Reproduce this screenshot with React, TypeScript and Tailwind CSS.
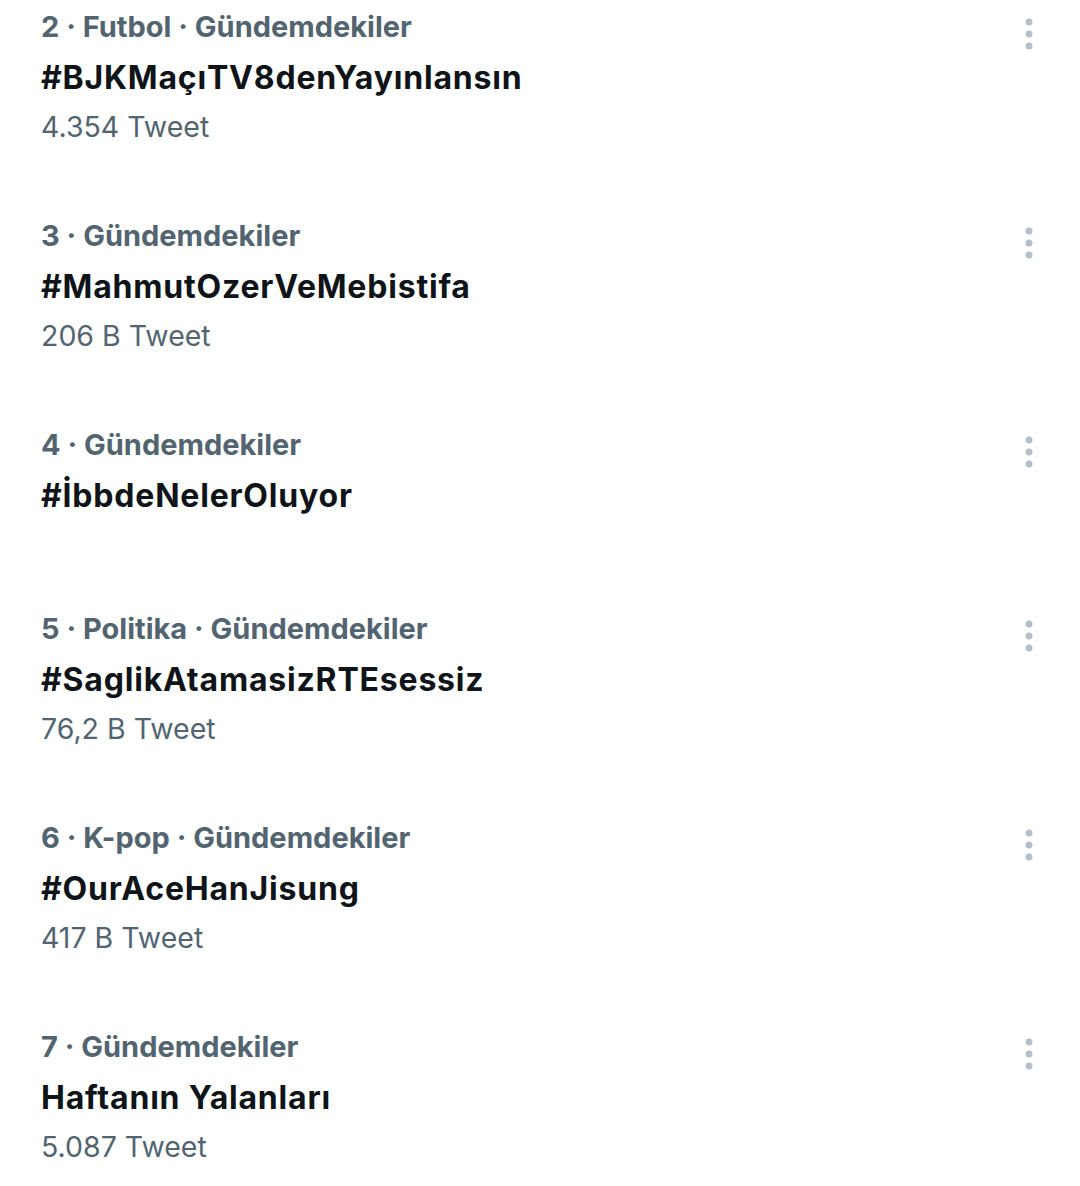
import React from 'react'

interface Trend {
  rank: number
  category?: string
  title: string
  count?: string
}

const trends: Trend[] = [
  { rank: 2, category: 'Futbol', title: '#BJKMaçıTV8denYayınlansın', count: '4.354 Tweet' },
  { rank: 3, title: '#MahmutOzerVeMebistifa', count: '206 B Tweet' },
  { rank: 4, title: '#İbbdeNelerOluyor' },
  { rank: 5, category: 'Politika', title: '#SaglikAtamasizRTEsessiz', count: '76,2 B Tweet' },
  { rank: 6, category: 'K-pop', title: '#OurAceHanJisung', count: '417 B Tweet' },
  { rank: 7, title: 'Haftanın Yalanları', count: '5.087 Tweet' },
]

function MoreIcon() {
  return (
    <svg width="10" height="34" viewBox="0 0 10 34" className="text-[#b3c0c9]">
      <circle cx="5" cy="5" r="3.5" fill="currentColor" />
      <circle cx="5" cy="17" r="3.5" fill="currentColor" />
      <circle cx="5" cy="29" r="3.5" fill="currentColor" />
    </svg>
  )
}

function TrendRow({ trend }: { trend: Trend }) {
  const meta = [String(trend.rank), trend.category, 'Gündemdekiler'].filter(Boolean).join(' · ')
  return (
    <div className={trend.count ? 'flex pb-[59px]' : 'flex pb-[84px]'}>
      <div className="flex-1">
        <div className="h-[50px] text-[29px] leading-[50px] font-bold text-[#536471]">{meta}</div>
        <div className="h-[50px] pt-[1px] text-[32px] leading-[50px] font-bold tracking-[0.8px] text-[#0f1419]">
          {trend.title}
        </div>
        {trend.count && (
          <div className="h-[50px] text-[28.5px] leading-[50px] text-[#536471]">{trend.count}</div>
        )}
      </div>
      <div className="w-[70px] pt-[15px] pl-[14px]">
        <MoreIcon />
      </div>
    </div>
  )
}

export default function App() {
  return (
    <div
      className="min-h-[1186px] w-[1080px] bg-white pt-[2px] pl-[41px]"
      style={{ fontFamily: 'Inter, "Liberation Sans", sans-serif' }}
    >
      {trends.map((t) => (
        <TrendRow key={t.rank} trend={t} />
      ))}
    </div>
  )
}
